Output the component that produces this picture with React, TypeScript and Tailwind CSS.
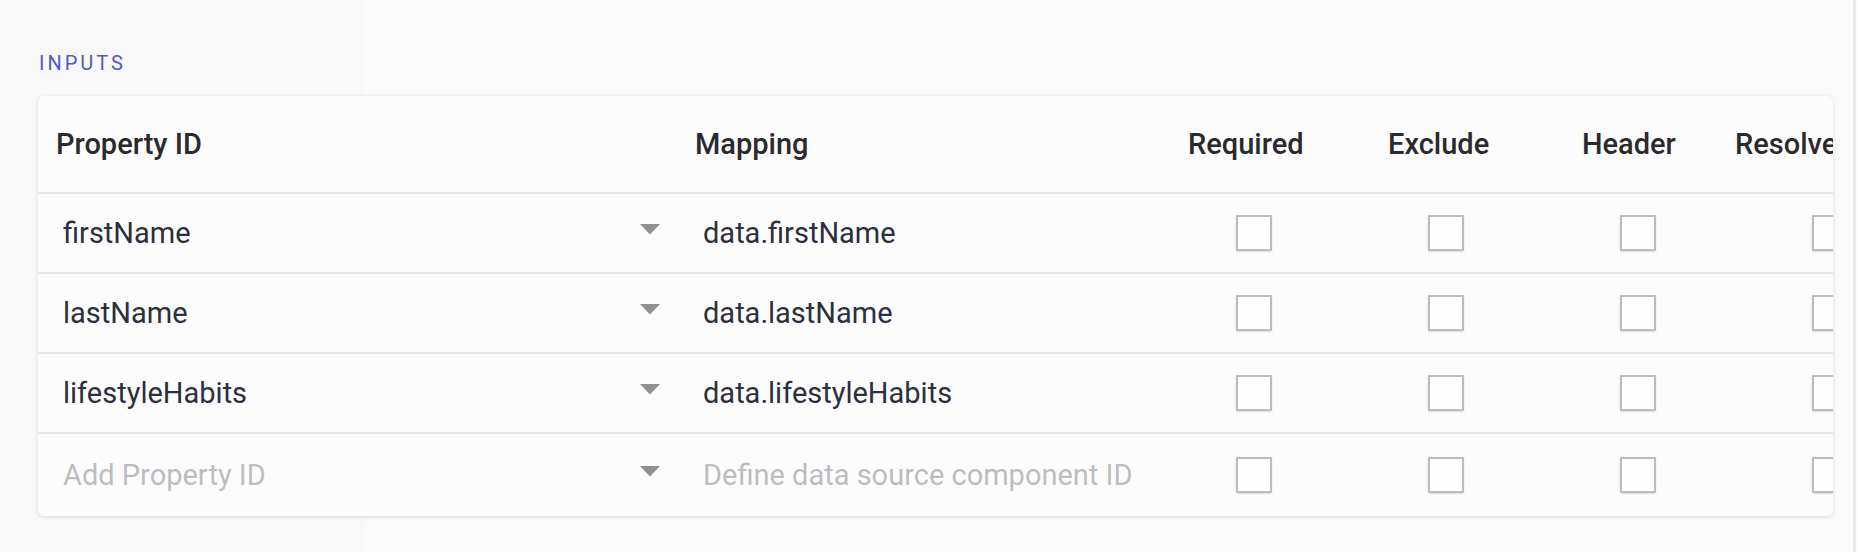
import React from "react";

type Row = { id: string; mapping: string; placeholder?: boolean };

const rows: Row[] = [
  { id: "firstName", mapping: "data.firstName" },
  { id: "lastName", mapping: "data.lastName" },
  { id: "lifestyleHabits", mapping: "data.lifestyleHabits" },
  { id: "Add Property ID", mapping: "Define data source component ID", placeholder: true },
];

function Triangle() {
  return (
    <svg width="20" height="11" viewBox="0 0 20 11" className="shrink-0 -mt-[8px]">
      <path d="M0 0 L20 0 L10 10.5 Z" fill="#8f8f94" />
    </svg>
  );
}

function Checkbox() {
  return (
    <div className="w-[36px] h-[36px] border-[2.5px] border-[#bcbcbe] rounded-[1px] bg-[#fdfdfe] shadow-[0_1px_2px_rgba(0,0,0,0.12)]" />
  );
}

export default function App() {
  return (
    <div
      className="flex w-[1858px] h-[552px] overflow-hidden bg-[linear-gradient(to_right,#f8f8f9_0px,#f8f8f9_362px,#fafafb_362px)]"
      style={{ fontFamily: "Roboto, 'Noto Sans', sans-serif" }}
    >
      <div className="flex-1 min-w-0 pt-[51px] pl-[38px] pr-[20px]">
        <div className="pl-[1px] text-[20px] leading-[24px] tracking-[0.15em] text-[#5656c8]">INPUTS</div>
        <div className="mt-[21px] w-[1795px] rounded-[6px] bg-[#fcfcfd] shadow-[0_1px_4px_rgba(0,0,0,0.13)] overflow-hidden">
          <div className="w-[1879px]">
            <div className="flex h-[98px] border-b-2 border-[#e6e6e9] items-center text-[29px] leading-[32px] font-medium text-[#2a2a2d]">
              <div className="w-[639px] shrink-0 pl-[18px]">Property ID</div>
              <div className="w-[493px] shrink-0 pl-[18px]">Mapping</div>
              <div className="w-[200px] shrink-0 pl-[18px]">Required</div>
              <div className="w-[194px] shrink-0 pl-[18px]">Exclude</div>
              <div className="w-[153px] shrink-0 pl-[18px]">Header</div>
              <div className="w-[200px] shrink-0 pl-[18px]">Resolve</div>
            </div>
            {rows.map((r, i) => (
              <div
                key={i}
                className={
                  i < rows.length - 1
                    ? "flex h-[80px] items-center border-b-2 border-[#e6e6e9] text-[29px] leading-[32px]"
                    : "flex h-[82px] items-center text-[29px] leading-[32px]"
                }
              >
                <div className="w-[639px] shrink-0 pl-[25px] pr-[17px] flex items-center justify-between">
                  <span className={r.placeholder ? "text-[#bcbcc1]" : "text-[#2c2f3d]"}>{r.id}</span>
                  <Triangle />
                </div>
                <div className={"w-[493px] shrink-0 pl-[26px] " + (r.placeholder ? "text-[#bcbcc1]" : "text-[#2c2f3d]")}>
                  {r.mapping}
                </div>
                <div className="w-[200px] shrink-0 pl-[66px]"><Checkbox /></div>
                <div className="w-[194px] shrink-0 pl-[58px]"><Checkbox /></div>
                <div className="w-[153px] shrink-0 pl-[56px]"><Checkbox /></div>
                <div className="w-[200px] shrink-0 pl-[95px]"><Checkbox /></div>
              </div>
            ))}
          </div>
        </div>
      </div>
      <div className="w-[3px] shrink-0 bg-[#e8e8ea]" />
      <div className="w-[2px] shrink-0 bg-[#fbfbfc]" />
    </div>
  );
}
